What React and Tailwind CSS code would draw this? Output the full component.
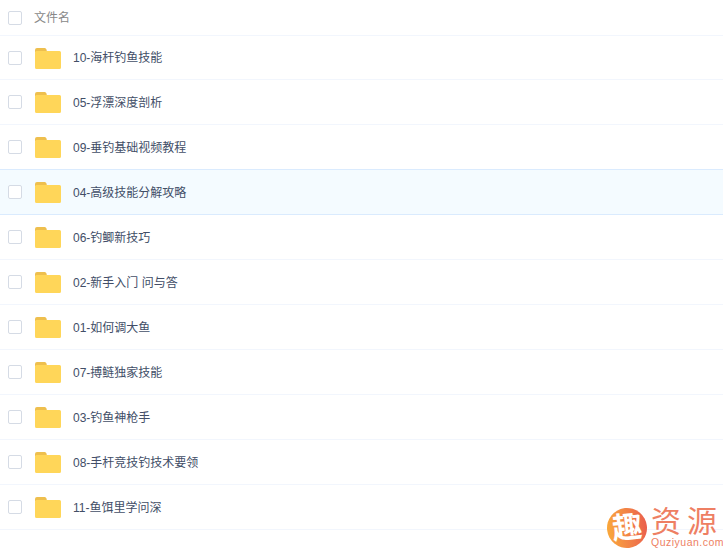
const rows = [
  "10-海杆钓鱼技能",
  "05-浮漂深度剖析",
  "09-垂钓基础视频教程",
  "04-高级技能分解攻略",
  "06-钓鲫新技巧",
  "02-新手入门 问与答",
  "01-如何调大鱼",
  "07-搏鲢独家技能",
  "03-钓鱼神枪手",
  "08-手杆竞技钓技术要领",
  "11-鱼饵里学问深",
];

const Check = () => (
  <span className="block w-[14px] h-[14px] shrink-0 rounded-[2px] border border-[#d5dbe5] bg-white" />
);

const Folder = () => (
  <svg width="26" height="21" viewBox="0 0 26 21" className="block shrink-0">
    <path d="M0 2a2 2 0 0 1 2-2h7.500a2 2 0 0 1 2 1.500L12 4H0z" fill="#eebf4e" />
    <path d="M0 4.500a1.500 1.500 0 0 1 1.500-1.500h23A1.500 1.500 0 0 1 26 4.500V19.500a1.500 1.500 0 0 1-1.500 1.500h-23A1.500 1.500 0 0 1 0 19.500z" fill="#ffd659" />
  </svg>
);

export default function App() {
  return (
    <div className="relative w-[723px] h-[550px] overflow-hidden bg-white font-['Liberation_Sans','Noto_Sans_CJK_SC',sans-serif] text-[12px]">
      <div className="flex items-center h-[36px] pl-[8px] border-b border-[#f2f6fd]">
        <Check />
        <span className="ml-[12px] text-[#888888]">文件名</span>
      </div>
      {rows.map((name, i) => (
        <div
          key={name}
          className={
            i === 3
              ? "flex items-center h-[45px] pl-[8px] border-b border-[#daebfe] bg-[#f4fbff] shadow-[0_-1px_0_#daebfe]"
              : i === 0
              ? "flex items-center h-[44px] pl-[8px] border-b border-[#f2f6fd]"
              : "flex items-center h-[45px] pl-[8px] border-b border-[#f2f6fd]"
          }
        >
          <Check />
          <span className="ml-[13px] mt-[1px]"><Folder /></span>
          <span className="ml-[12px] mt-[1px] text-[#424e67]">{name}</span>
        </div>
      ))}
      <div className="absolute left-[607px] top-[508px] w-[40px] h-[40px]">
        <div className="w-[40px] h-[40px] rounded-full bg-gradient-to-r from-[#f9a83a] to-[#ea5f4c] flex items-center justify-center -rotate-6">
          <span className="text-white font-bold text-[30px] leading-none">趣</span>
        </div>
      </div>
      <div className="absolute left-[651px] top-[506px] w-[72px]">
        <div className="text-[#ee7f63] text-[30px] leading-[31px] whitespace-nowrap tracking-[6px]">资源</div>
        <div className="text-[#ee7f63] text-[10.500px] leading-[10px] whitespace-nowrap font-['Liberation_Sans',sans-serif] tracking-[0.5px]">Quziyuan.com</div>
      </div>
    </div>
  );
}
